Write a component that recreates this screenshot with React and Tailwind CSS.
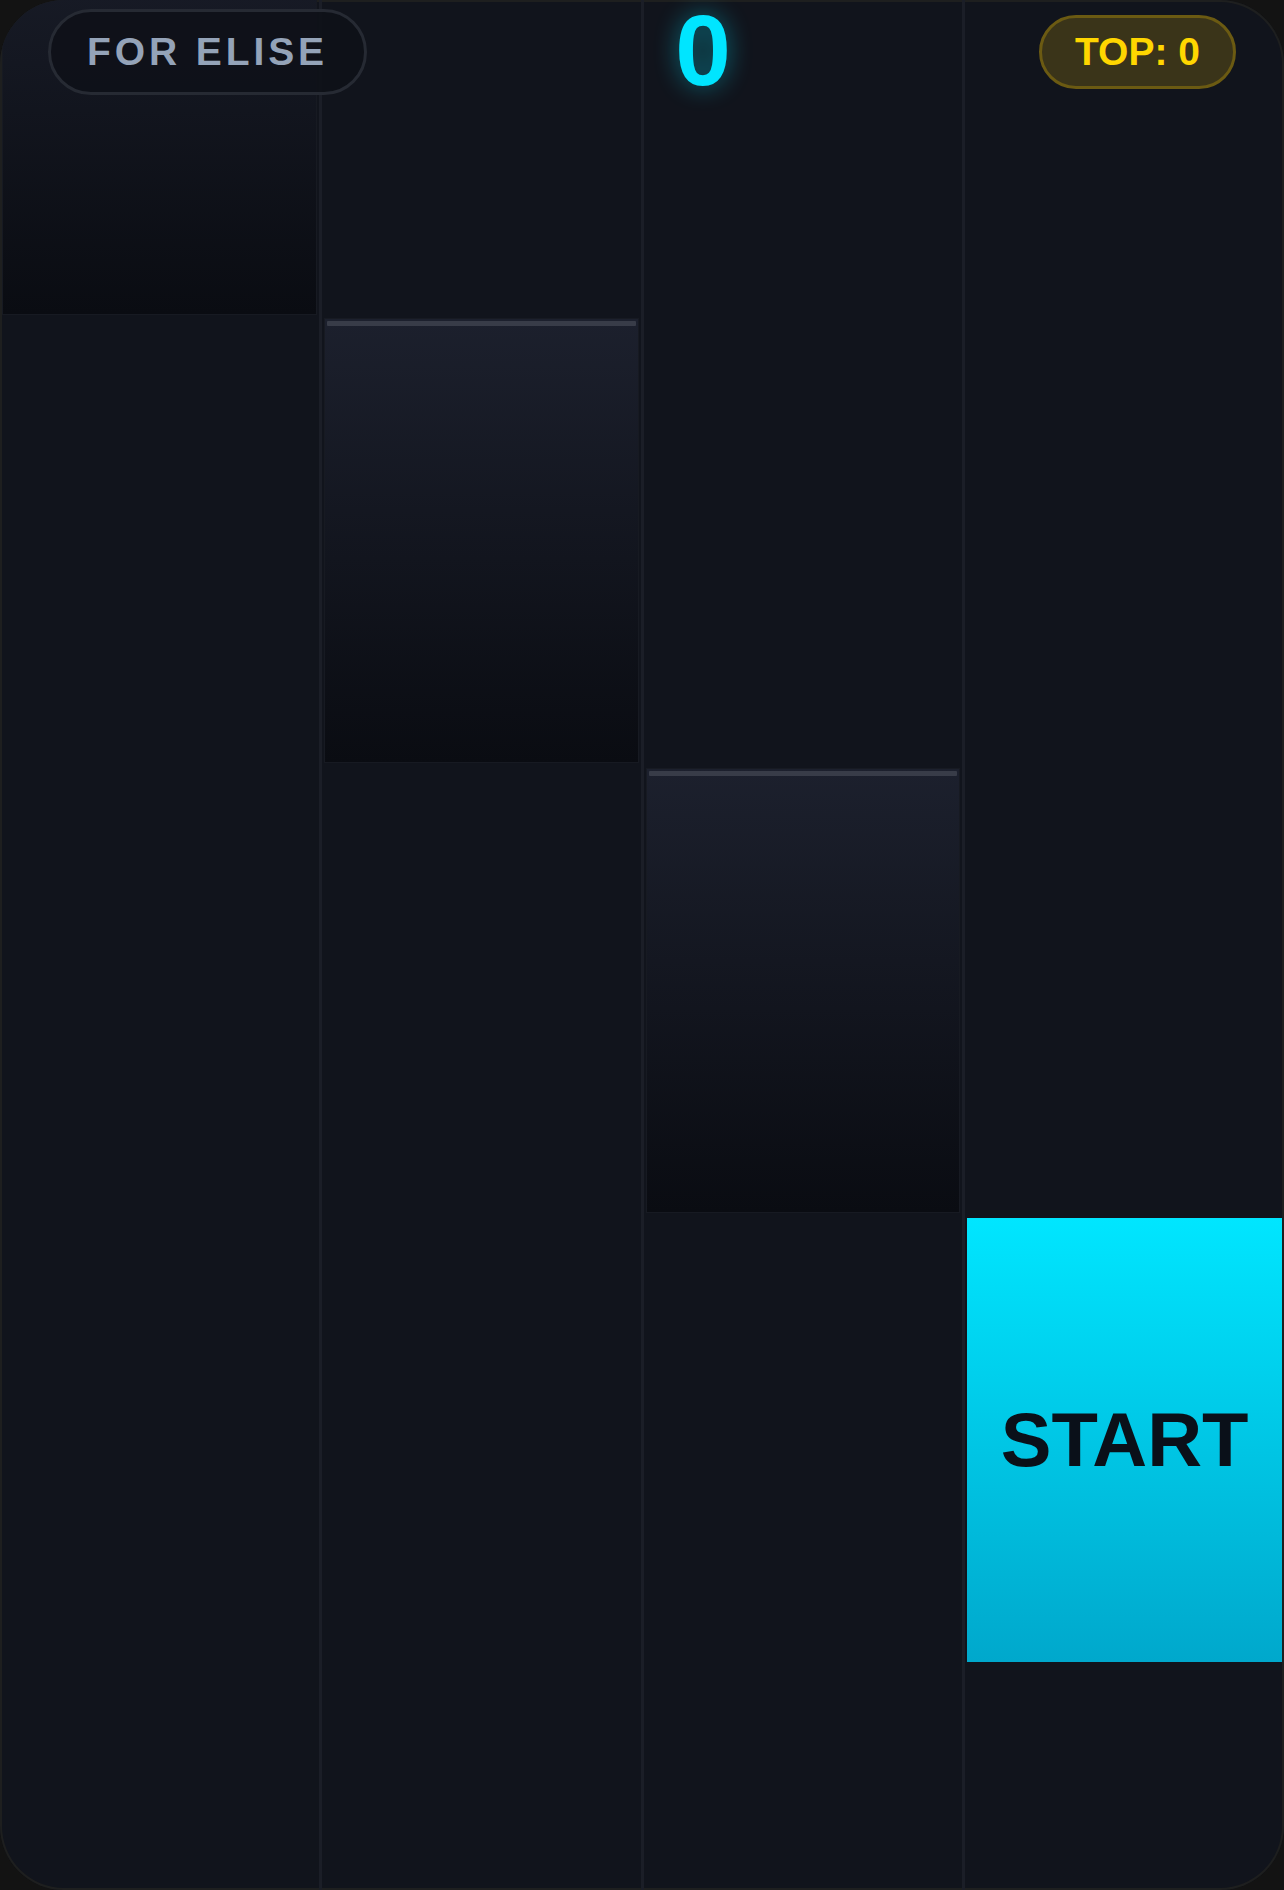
import React from 'react';

// lane index -> tile on that lane
const tiles = [
  { lane: 0, top: -130, kind: 'dark' },
  { lane: 1, top: 318, kind: 'dark' },
  { lane: 2, top: 768, kind: 'dark' },
  { lane: 3, top: 1218, kind: 'start' },
];

const laneBorders = [
  'border-r-[2px]',
  'border-l-[1px] border-r-[2px]',
  'border-l-[1px] border-r-[2px]',
  'border-l-[1px]',
];

const DarkTile = ({ top }) => (
  <div
    className="absolute inset-x-[2px] h-[445px] bg-gradient-to-b from-[#1c202d] to-[#0a0c12] border border-[#171a22]"
    style={{ top }}
  >
    <div className="mx-[2px] mt-[2px] h-[5px] rounded-[1px] bg-[#383c48]" />
  </div>
);

const StartTile = ({ top }) => (
  <div
    className="absolute inset-x-[2px] h-[444px] bg-gradient-to-b from-[#00e6ff] to-[#00a8cc] flex items-center justify-center"
    style={{ top }}
  >
    <span className="font-['Liberation_Sans',Arial,sans-serif] font-bold text-[76px] leading-none text-[#0a1019]">
      START
    </span>
  </div>
);

export default function App() {
  return (
    <div className="w-[1284px] h-[1890px] bg-[#131313]">
      <div className="relative w-full h-full overflow-hidden rounded-[64px] bg-[#11141c] shadow-[inset_0_0_0_2px_#1e1f1f]">
        {/* lanes */}
        <div className="flex h-full">
          {laneBorders.map((b, i) => (
            <div key={i} className={`relative flex-1 h-full border-[#1b1e27] ${b}`}>
              {tiles
                .filter(t => t.lane === i)
                .map(t =>
                  t.kind === 'start'
                    ? <StartTile key={t.top} top={t.top} />
                    : <DarkTile key={t.top} top={t.top} />
                )}
            </div>
          ))}
        </div>

        {/* header overlay */}
        <div className="absolute top-0 inset-x-0 h-[104px] flex items-center justify-between px-[48px]">
          <div className="h-[86px] px-[36px] flex items-center rounded-full border-[3px] border-[#262a33] bg-[#0e1118]/90 font-['Liberation_Sans',Arial,sans-serif] font-bold text-[39px] tracking-[0.1em] text-[#94a3b8]">
            FOR ELISE
          </div>
          <div className="-mt-[4px] font-['Liberation_Sans',Arial,sans-serif] font-bold text-[100px] leading-none text-[#00e5ff] [text-shadow:0_0_24px_rgba(0,229,255,0.45)]">
            0
          </div>
          <div className="h-[74px] px-[33px] flex items-center rounded-full border-[3px] border-[#6b5a12] bg-[#3a3419] font-['Liberation_Sans',Arial,sans-serif] font-bold text-[39px] text-[#ffd600]">
            TOP: 0
          </div>
        </div>
      </div>
    </div>
  );
}
